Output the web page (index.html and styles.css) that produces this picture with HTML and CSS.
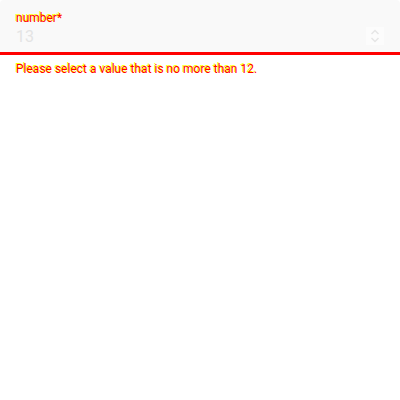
FILE: index.html
```html
<!DOCTYPE html>
<html>
<head>
<meta charset="utf-8">
<link rel="stylesheet" href="styles.css">
</head>
<body>
<div class="field">
  <div class="box">
    <div class="inner">
      <div class="label">number*</div>
      <div class="value">13</div>
    </div>
    <div class="spin">
      <svg width="12" height="16" viewBox="0 0 12 16"><path d="M2.5 6 L6 2.5 L9.5 6 M2.5 10 L6 13.5 L9.5 10" fill="none" stroke="#e6e6e6" stroke-width="1.5"/></svg>
    </div>
  </div>
  <div class="helper">Please select a value that is no more than 12.</div>
</div>
</body>
</html>
```
FILE: styles.css
```css
html, body { margin: 0; padding: 0; background: #fff; }
body { font-family: Roboto, "Liberation Sans", sans-serif; }
.box {
  background: #f9f9f9;
  border-bottom: 3px solid #ff0000;
  height: 52px;
  display: flex;
  align-items: flex-start;
  padding: 0 16px;
  border-radius: 4px 4px 0 0;
}
.inner { flex: 1; padding-top: 10px; }
.label {
  font-size: 12px;
  line-height: 16px;
  color: #ff0000;
  text-shadow: -1px -1px 0 #ffff00;
}
.value {
  font-size: 16px;
  line-height: 20px;
  margin-top: 1px;
  color: #e4e4e4;
}
.spin {
  width: 18px; height: 18px;
  margin-top: 27px;
  background: #fcfcfc;
  display: flex; align-items: center; justify-content: center;
}
.helper {
  padding: 6px 16px 0;
  font-size: 12px;
  line-height: 16px;
  color: #ff0000;
  text-shadow: -1px -1px 0 #ffff00;
}
```
